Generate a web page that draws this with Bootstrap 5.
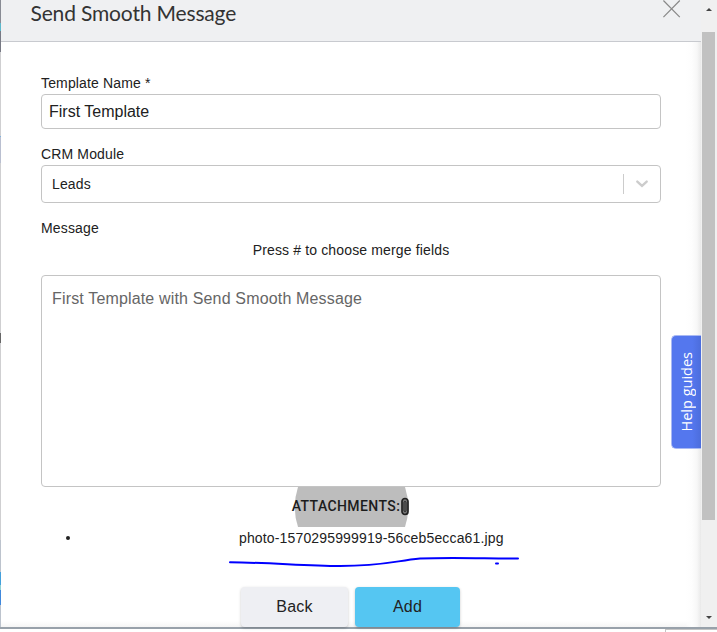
<!DOCTYPE html>
<html lang="en">
<head>
<meta charset="utf-8">
<title>Send Smooth Message</title>
<link href="https://cdn.jsdelivr.net/npm/bootstrap@5.3.0/dist/css/bootstrap.min.css" rel="stylesheet">
<style>
html,body{height:632px;overflow:hidden}
body{font-family:"Liberation Sans",Arial,sans-serif;font-size:14px;line-height:20px;color:#212121;background:#fff}
.window-area{height:627px}
.page-edge{width:1px;background:linear-gradient(#888b94 0 23px,#5cb8cc 23px 31px,#777984 31px 52px,#cfcfd1 52px 136px,#7fb2dd 136px 137px,#b9bfd0 137px 163px,#cfcfd1 163px 333px,#666 333px 343px,#cfcfd1 343px 540px,#bcc3cd 540px 572px,#43a0dc 572px 585px,#8fd0d4 585px 590px,#4088dc 590px 605px,#bcc3cd 605px)}
.sheet{width:700px}
.sheet-head{height:42px;background:#eff0f2;border-bottom:1px solid #c8cacf;padding:0 20px 0 29.5px}
.sheet-title{font-family:Lato,sans-serif;font-size:21px;line-height:26px;font-weight:400;letter-spacing:-.16px;color:#333;white-space:nowrap}
.sheet-body{height:585px;padding:31px 40px 0;background:linear-gradient(to left,#e9e9e9 0,#f7f7f7 4px,#fdfdfd 9px,rgba(255,255,255,0) 16px),linear-gradient(to top,#f5f5f5,#fff 6px)}
.field-label{height:21px;letter-spacing:.15px;white-space:nowrap}
.form-control.box{border:1px solid #c4c4c4;border-radius:4px;color:#212121;background:#fff;box-shadow:none}
.form-control.name-box{height:35px;font-size:16px;padding:0 7px;margin-bottom:15px}
.form-control.module-box{height:38px;font-size:14px;letter-spacing:.15px;padding:0 0 0 10px;margin-bottom:15px}
.module-box .rule{width:1px;height:20px;background:#ccc}
.module-box .arrow{width:36px}
.hint{height:20px;margin:1px 0 15px;letter-spacing:.15px}
.form-control.message-box{height:212px;font-size:16px;line-height:24px;letter-spacing:.16px;padding:11px 10px 9px;resize:none;color:#666}
.attach-bg{left:0;top:0;z-index:0}
.attach-text{font-family:Roboto,sans-serif;font-size:14px;line-height:18px;font-weight:500;letter-spacing:.4px;white-space:nowrap;z-index:1;color:#1c1c1c;padding-bottom:2px}
.attach-row{width:120px;height:40px;padding-bottom:1px}
.file-row{height:22px;line-height:22px}
.dot{width:4px;height:4px;background:#222;margin-left:25px}
.file-name{margin-left:169px;letter-spacing:.15px;white-space:nowrap}
.ink{display:block;margin-left:184px}
.actions{gap:7px;margin-top:18px;padding-right:1px}
.btn.act{height:40px;border:0;border-radius:4px;font-size:16px;color:#222;letter-spacing:.2px;padding:0;box-shadow:0 1px 3px rgba(0,0,0,.22)}
.btn.act-back{width:107px;background:#eeeff3}
.btn.act-add{width:105px;background:#55c6f2}
.help-tab{left:671px;top:335px;width:30px;height:114px;background:linear-gradient(to right,#5477ee 70%,#4c6ddc);border:1px solid #a9b9f3;border-right:0;border-radius:5px 0 0 5px}
.help-tab span{writing-mode:vertical-rl;transform:rotate(180deg);font-family:"Open Sans",sans-serif;font-size:14.5px;line-height:20px;color:#fff;white-space:nowrap}
.scroller{width:16px;background:#f0f0f0}
.thumb{width:13px;height:488px;margin:0 0 0 1px;background:#c1c1c1}
.floor{height:2px;background:#98a1aa}
.under{height:3px;padding-left:665px}
.under div{width:52px;height:3px;border-top:1px solid #c4c4c4;border-left:1px solid #c4c4c4}
</style>
<script src="https://cdn.jsdelivr.net/npm/bootstrap@5.3.0/dist/js/bootstrap.bundle.min.js"></script>
</head>
<body class="m-0 position-relative">
<div class="window-area d-flex">
  <div class="page-edge flex-shrink-0"></div>
  <main class="sheet flex-shrink-0">
    <header class="sheet-head d-flex justify-content-between align-items-start">
      <h1 class="sheet-title m-0">Send Smooth Message</h1>
      <svg width="18" height="18" viewBox="0 0 18 18" fill="none" stroke="#888" stroke-width="1.2"><path d="M.4.5 16.8 17.2M16.8.5.4 17.2"/></svg>
    </header>
    <form class="sheet-body">
      <label class="field-label d-block" for="tname">Template Name *</label>
      <input id="tname" class="form-control box name-box" value="First Template">
      <div class="field-label">CRM Module</div>
      <div class="form-control box module-box d-flex align-items-center">
        <span class="flex-grow-1">Leads</span><span class="rule"></span>
        <span class="arrow d-flex justify-content-center"><svg width="14" height="10" viewBox="0 0 14 10" fill="none" stroke="#ccc" stroke-width="2.4" stroke-linecap="round"><path d="m2.3 2.6 4.7 4.3 4.7-4.3"/></svg></span>
      </div>
      <div class="field-label">Message</div>
      <div class="hint text-center">Press # to choose merge fields</div>
      <textarea class="form-control box message-box">First Template with Send Smooth Message</textarea>
      <div class="attach-row position-relative d-flex align-items-center justify-content-center mx-auto">
        <svg class="attach-bg position-absolute" width="120" height="40" viewBox="0 0 120 40"><path d="M7 0H114Q120.500 20 114 40H7Q.5 20 7 0Z" fill="#bdbdbd"/></svg>
        <span class="attach-text">ATTACHMENTS:</span>
        <svg class="position-relative" width="10" height="20" viewBox="-1 0 10 20" fill="none" stroke="#222"><rect x="1" y="1.500" width="6" height="16" rx="3" fill="#777" stroke-width="1.700"/><rect x="3" y="4.500" width="2" height="10" rx="1"/></svg>
      </div>
      <div class="file-row d-flex align-items-center"><span class="dot rounded-circle"></span><span class="file-name">photo-1570295999919-56ceb5ecca61.jpg</span></div>
      <svg class="ink" width="300" height="20" viewBox="225 549 300 20" fill="none" stroke="#00f" stroke-width="2" stroke-linecap="round"><path d="M230 562.3C270 562.5 305 566 340 566C382 566 395 561 420 558.5C450 557 485 558.5 518 558.5M496 563.5h2"/></svg>
      <div class="actions d-flex justify-content-center">
        <button type="button" class="btn act act-back">Back</button>
        <button type="button" class="btn act act-add">Add</button>
      </div>
    </form>
  </main>
  <div class="scroller d-flex flex-column justify-content-between flex-shrink-0">
    <div><svg class="d-block" width="16" height="32" viewBox="0 0 16 32"><path d="M5 11 8 8 11 11Z" fill="#444"/></svg><div class="thumb"></div></div>
    <svg width="16" height="14" viewBox="0 0 16 14"><path d="M5 3H11L8 6Z" fill="#444"/></svg>
  </div>
</div>
<div class="floor"></div>
<div class="under"><div></div></div>
<div class="help-tab position-absolute d-flex align-items-center justify-content-center"><span>Help guides</span></div>
</body>
</html>
